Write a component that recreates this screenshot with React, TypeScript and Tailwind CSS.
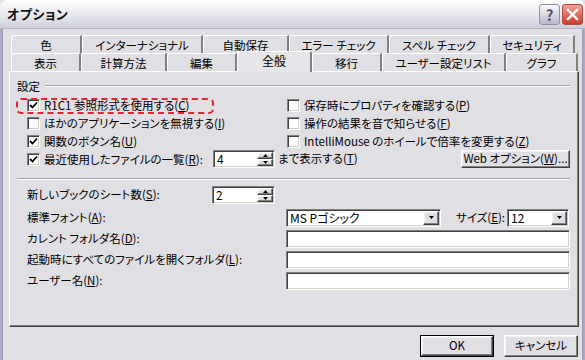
import React from "react";

const sunken =
  "border border-t-[#808080] border-l-[#808080] border-r-white border-b-white shadow-[inset_1px_1px_0_#404040,inset_-1px_-1px_0_#d4d0c8]";
const raised =
  "border border-t-white border-l-white border-r-[#404040] border-b-[#404040] shadow-[inset_-1px_-1px_0_#808080,inset_1px_1px_0_#f4f4f6]";

function M({ c }: { c: string }) {
  return <span className="underline underline-offset-[1px]">{c}</span>;
}

function Check({ checked }: { checked?: boolean }) {
  return (
    <div className={`w-[13px] h-[13px] bg-white shrink-0 ${sunken} flex items-center justify-center`}>
      {checked && (
        <svg width="9" height="9" viewBox="0 0 9 9">
          <path d="M1 4 L3.5 6.5 L8 1.5" stroke="#000" strokeWidth="1.8" fill="none" />
        </svg>
      )}
    </div>
  );
}

function CheckRow({ checked, children }: { checked?: boolean; children: React.ReactNode }) {
  return (
    <div className="flex items-center gap-[4px] h-[18px]">
      <Check checked={checked} />
      <span className="whitespace-nowrap leading-[14px]">{children}</span>
    </div>
  );
}

function Tri({ up }: { up?: boolean }) {
  return (
    <svg width="5" height="3" viewBox="0 0 5 3">
      <path d={up ? "M0 3 L2.5 0 L5 3 Z" : "M0 0 L5 0 L2.5 3 Z"} fill="#000" />
    </svg>
  );
}

function Spin({ value, w }: { value: string; w: string }) {
  return (
    <div className={`${w} h-[18px] bg-white ${sunken} flex items-stretch p-[1px]`}>
      <span className="flex-1 pl-[2px] leading-[14px] text-[12px]">{value}</span>
      <div className="w-[16px] flex flex-col">
        <div className={`flex-1 bg-[#e0dfe3] ${raised} flex items-center justify-center`}>
          <Tri up />
        </div>
        <div className={`flex-1 bg-[#e0dfe3] ${raised} flex items-center justify-center`}>
          <Tri />
        </div>
      </div>
    </div>
  );
}

function Select({ value, w }: { value: string; w: string }) {
  return (
    <div className={`${w} h-[18px] bg-white ${sunken} flex items-stretch p-[1px]`}>
      <span className="flex-1 pl-[2px] leading-[14px] whitespace-nowrap text-[12px]">{value}</span>
      <div className={`w-[16px] bg-[#e0dfe3] ${raised} flex items-center justify-center`}>
        <Tri />
      </div>
    </div>
  );
}

function Tab({ label, w, selected }: { label: string; w: string; selected?: boolean }) {
  if (selected) {
    return (
      <div
        className={`${w} h-[21px] -mb-[1px] relative z-10 bg-[#e6e5e9] border-l border-t border-white border-r-2 border-r-[#808080] rounded-t-[3px] flex items-start justify-center pt-[1px] leading-[16px] text-[12px]`}
      >
        {label}
      </div>
    );
  }
  return (
    <div
      className={`${w} h-[18px] bg-[#e0dfe3] border-l border-t border-white border-r-2 border-r-[#808080] rounded-tl-[3px] flex items-center justify-center leading-[16px] whitespace-nowrap`}
    >
      {label}
    </div>
  );
}

function Etched({ className }: { className?: string }) {
  return <div className={`h-[2px] border-t border-[#a0a0a0] border-b border-b-white ${className ?? ""}`} />;
}

export default function App() {
  return (
    <div className="w-[585px] h-[360px] overflow-hidden bg-[#e0dfe3] flex flex-col font-['Noto_Sans_CJK_JP','Noto_Sans',sans-serif] text-[11.5px] text-black [font-feature-settings:'palt']">
      {/* Title bar */}
      <div className="h-[29px] shrink-0 rounded-t-[7px] bg-gradient-to-b from-[#ffffff] via-[#e9e9ef] to-[#cfcfda] border-b border-[#b5b4c6] flex items-center pl-[7px] pr-[2px]">
        <span className="font-bold text-[13px] tracking-[0.5px] text-[#111]">オプション</span>
        <div className="ml-auto flex gap-[2px]">
          <div className="w-[21px] h-[21px] rounded-[3px] border border-[#8f8fa8] bg-gradient-to-b from-[#fbfbfd] to-[#b8b7cc] flex items-center justify-center text-[15px] font-bold text-[#505068] leading-none">
            ?
          </div>
          <div className="w-[21px] h-[21px] rounded-[3px] border border-[#b44a3e] bg-gradient-to-b from-[#f0a191] to-[#c9382a] flex items-center justify-center">
            <svg width="13" height="13" viewBox="0 0 13 13">
              <path d="M2 2 L11 11 M11 2 L2 11" stroke="#fff" strokeWidth="2.4" strokeLinecap="square" />
            </svg>
          </div>
        </div>
      </div>

      <div className="flex-1 flex">
        <div className="w-[3px] bg-gradient-to-r from-[#b2b1c6] to-[#9c9bb4]" />
        <div className="flex-1 flex flex-col pt-[6px]">
          {/* Tabs row 1 */}
          <div className="flex pl-[8px]">
            <Tab label="色" w="w-[71px]" />
            <Tab label="インターナショナル" w="w-[121px]" />
            <Tab label="自動保存" w="w-[86px]" />
            <Tab label="エラー チェック" w="w-[100px]" />
            <Tab label="スペル チェック" w="w-[101px]" />
            <Tab label="セキュリティ" w="w-[85px]" />
          </div>
          {/* Tabs row 2 */}
          <div className="flex items-end h-[18px] pl-[8px]">
            <Tab label="表示" w="w-[70px]" />
            <Tab label="計算方法" w="w-[86px]" />
            <Tab label="編集" w="w-[70px]" />
            <Tab label="全般" w="w-[75px]" selected />
            <Tab label="移行" w="w-[70px]" />
            <Tab label="ユーザー設定リスト" w="w-[124px]" />
            <Tab label="グラフ" w="w-[72px]" />
          </div>
          {/* Panel */}
          <div className="ml-[6px] w-[570px] h-[256px] relative border-l border-t border-white border-r border-b border-r-[#404040] border-b-[#404040] shadow-[inset_-1px_-1px_0_#808080] px-[7px]">
            {/* 設定 header */}
            <div className="flex items-center h-[14px] mt-[7px]">
              <span className="leading-[14px]">設定</span>
              <Etched className="flex-1 ml-[5px] mr-[1px]" />
            </div>
            {/* checkbox rows */}
            <div className="mt-[3px] flex pl-[10px]">
              <div className="w-[260px] flex flex-col">
                <CheckRow checked>
                  R1C1 参照形式を使用する(<M c="C" />)
                </CheckRow>
                <CheckRow>
                  ほかのアプリケーションを無視する(<M c="I" />)
                </CheckRow>
                <CheckRow checked>
                  関数のボタン名(<M c="U" />)
                </CheckRow>
              </div>
              <div className="flex flex-col">
                <CheckRow>
                  保存時にプロパティを確認する(<M c="P" />)
                </CheckRow>
                <CheckRow>
                  操作の結果を音で知らせる(<M c="F" />)
                </CheckRow>
                <CheckRow>
                  IntelliMouse のホイールで倍率を変更する(<M c="Z" />)
                </CheckRow>
              </div>
            </div>
            <div className="flex items-center pl-[10px] h-[18px]">
              <div className="w-[186px]">
                <CheckRow checked>
                  最近使用したファイルの一覧(<M c="R" />):
                </CheckRow>
              </div>
              <Spin value="4" w="w-[62px]" />
              <span className="ml-[3px] whitespace-nowrap">
                まで表示する(<M c="T" />)
              </span>
              <div className={`ml-auto mr-[1px] w-[109px] h-[18px] bg-[#e0dfe3] ${raised} flex items-center justify-center whitespace-nowrap`}>
                Web オプション(<M c="W" />)...
              </div>
            </div>
            <Etched className="mt-[10px] mr-[1px]" />
            {/* lower section */}
            <div className="mt-[6px] flex flex-col gap-[3px] pl-[10px]">
              <div className="flex items-center h-[18px]">
                <span className="w-[185px] whitespace-nowrap">
                  新しいブックのシート数(<M c="S" />):
                </span>
                <Spin value="2" w="w-[63px]" />
              </div>
              <div className="flex items-center h-[19px] mt-[1px]">
                <span className="w-[259px] whitespace-nowrap">
                  標準フォント(<M c="A" />):
                </span>
                <Select value="MS Pゴシック" w="w-[155px]" />
                <span className="ml-[15px] w-[51px] whitespace-nowrap">
                  サイズ(<M c="E" />):
                </span>
                <Select value="12" w="w-[62px]" />
              </div>
              <div className="flex items-center h-[18px]">
                <span className="w-[259px] whitespace-nowrap">
                  カレント フォルダ名(<M c="D" />):
                </span>
                <div className={`w-[284px] h-[18px] bg-white ${sunken}`} />
              </div>
              <div className="flex items-center h-[18px]">
                <span className="w-[259px] whitespace-nowrap">
                  起動時にすべてのファイルを開くフォルダ(<M c="L" />):
                </span>
                <div className={`w-[284px] h-[18px] bg-white ${sunken}`} />
              </div>
              <div className="flex items-center h-[18px]">
                <span className="w-[259px] whitespace-nowrap">
                  ユーザー名(<M c="N" />):
                </span>
                <div className={`w-[284px] h-[18px] bg-white ${sunken}`} />
              </div>
            </div>
            {/* red dashed annotation */}
            <div className="absolute left-[6px] top-[26px] w-[198px] h-[16px] border-2 border-dashed border-[#e0282e] rounded-[5px] pointer-events-none" />
          </div>
          {/* buttons */}
          <div className="flex justify-end gap-[10px] mt-[8px] pr-[4px]">
            <div className="w-[74px] h-[22px] border border-black">
              <div className={`w-full h-full bg-[#e0dfe3] ${raised} flex items-center justify-center`}>OK</div>
            </div>
            <div className={`w-[74px] h-[22px] bg-[#e0dfe3] ${raised} flex items-center justify-center`}>キャンセル</div>
          </div>
        </div>
        <div className="w-[3px] bg-gradient-to-r from-[#9c9bb4] to-[#b2b1c6]" />
      </div>
    </div>
  );
}
